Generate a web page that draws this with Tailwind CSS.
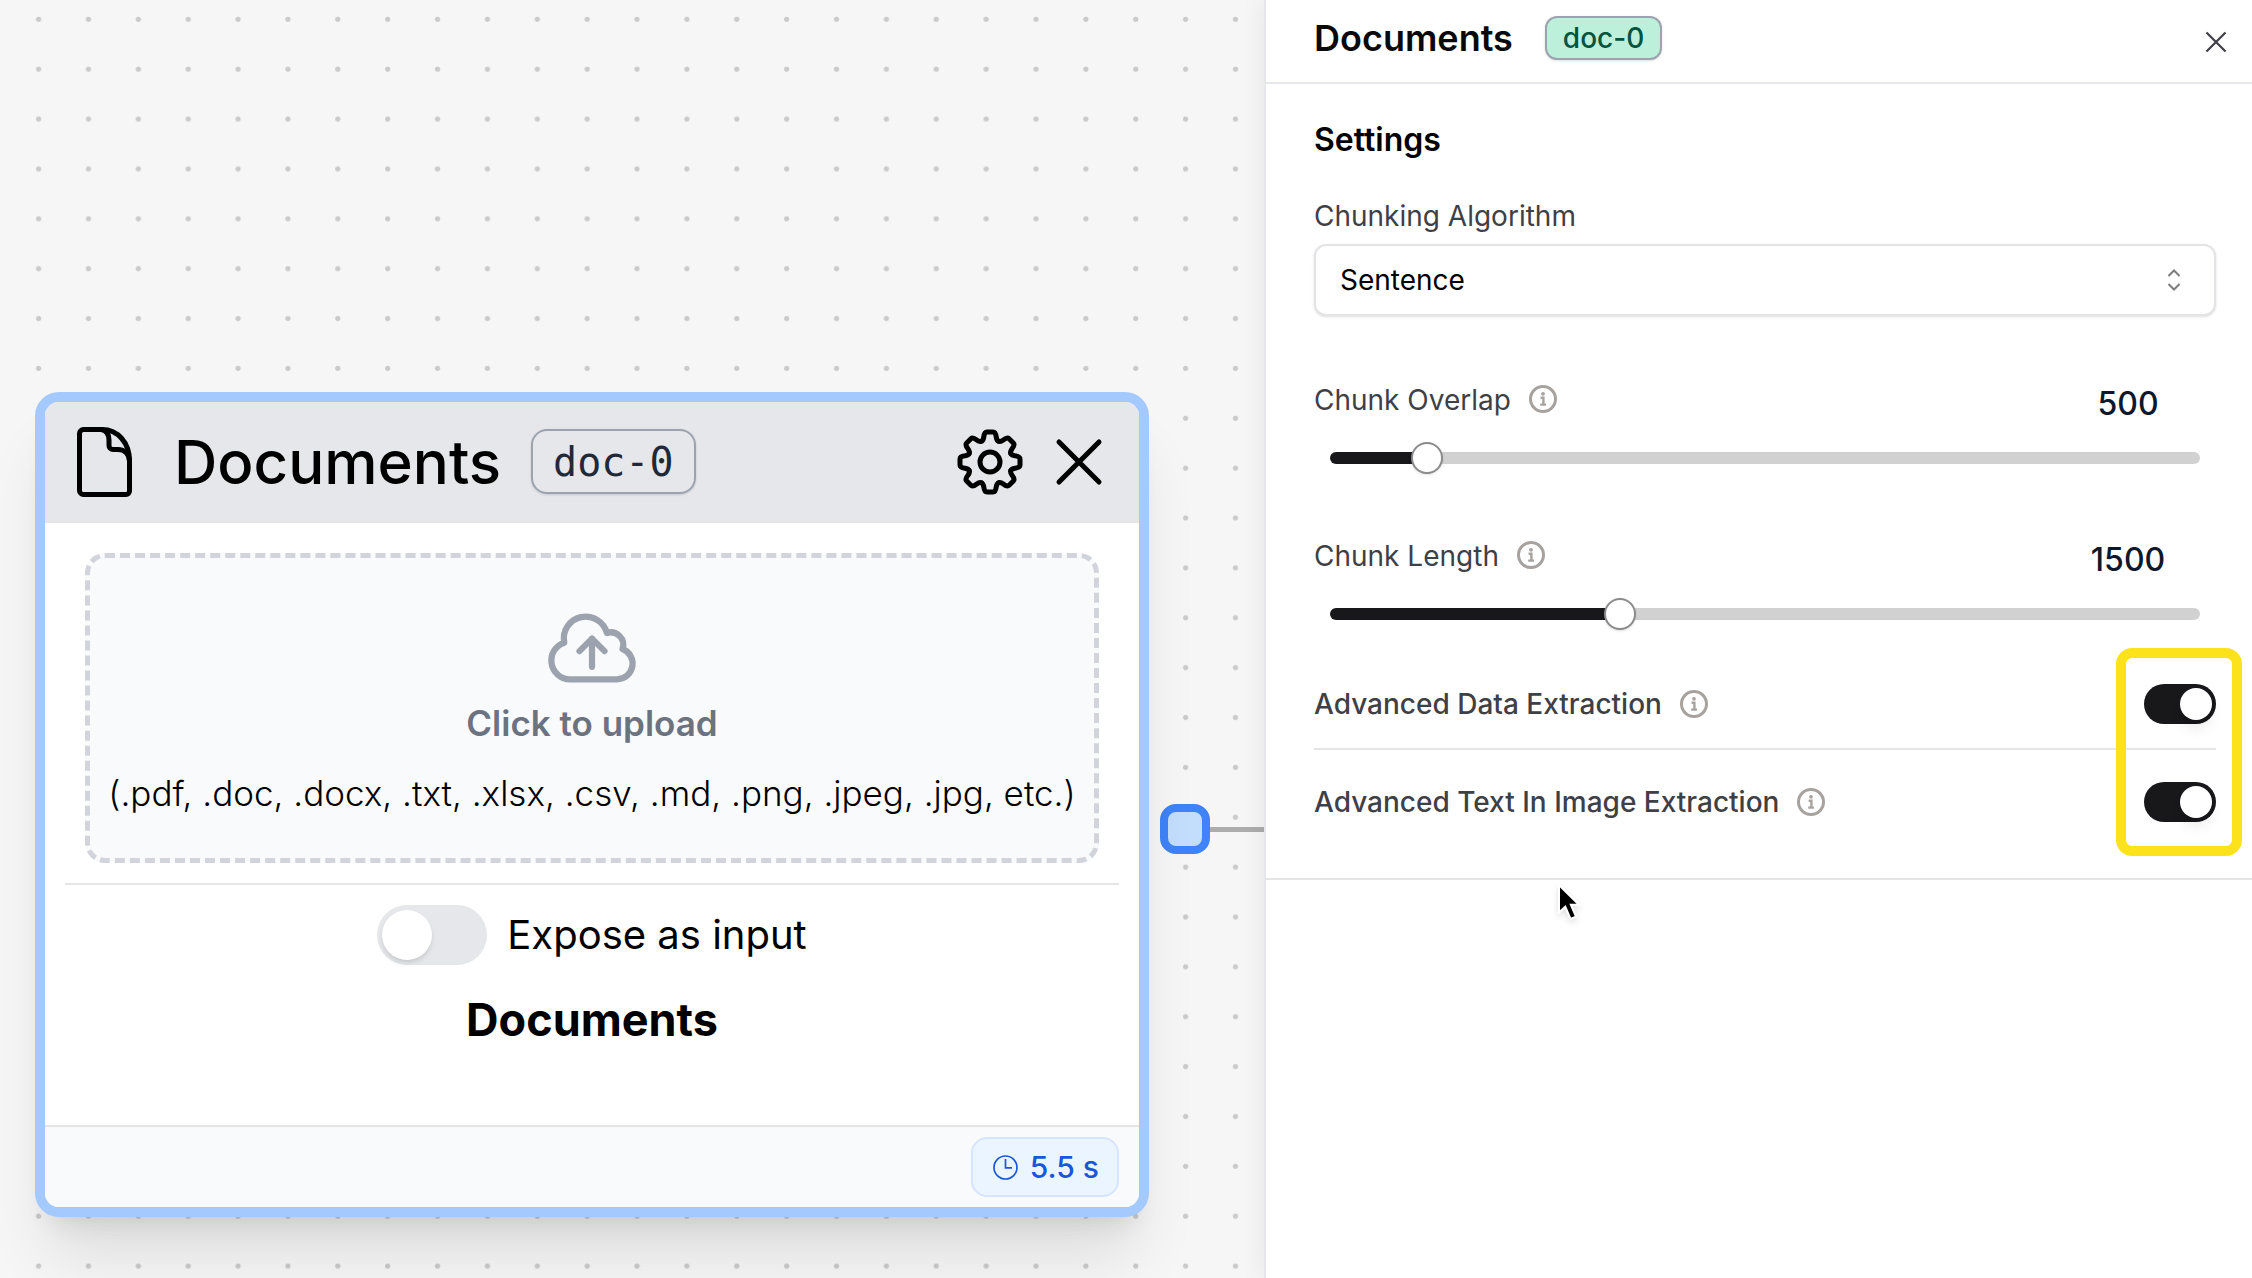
<!DOCTYPE html>
<html lang="en">
<head>
<meta charset="utf-8">
<meta name="viewport" content="width=device-width, initial-scale=1">
<title>Documents node</title>
<script src="https://cdn.jsdelivr.net/npm/@tailwindcss/browser@4"></script>
</head>
<body class="bg-white font-['Inter',sans-serif] text-black">
<svg class="hidden" aria-hidden="true">
  <symbol id="info" viewBox="0 0 28 28">
    <circle cx="14" cy="14" r="12.500" fill="none" stroke="currentColor" stroke-width="3"/>
    <circle cx="14" cy="8.800" r="1.900" fill="currentColor"/>
    <path d="M11.600 12.800H14.400V19.600M11.200 19.600H17" fill="none" stroke="currentColor" stroke-width="2.400"/>
  </symbol>
</svg>
<div class="grid min-h-screen grid-cols-[1264fr_988fr]">

  <!-- Flow canvas -->
  <main class="relative overflow-hidden bg-[#f6f6f6]">
    <svg class="absolute inset-0 size-full" aria-hidden="true">
      <defs>
        <pattern id="dots" width="49.87" height="49.87" patternUnits="userSpaceOnUse">
          <circle cx="38.6" cy="19.3" r="2.600" fill="#cacaca"/>
        </pattern>
      </defs>
      <rect width="100%" height="100%" fill="url(#dots)"/>
    </svg>

    <div class="absolute top-[827px] right-0 left-[1200px] h-[5px] bg-[#adadad]"></div>
    <div class="absolute top-[804px] left-[1160px] size-[50px] rounded-2xl border-8 border-[#3f83f8] bg-[#c3ddfd]"></div>

    <article class="absolute top-[392px] left-[35px] w-[1114px] rounded-3xl border-10 border-[#a4c9ff] bg-white shadow-[0_50px_62px_-12px_rgba(0,0,0,0.1),0_20px_25px_-15px_rgba(0,0,0,0.1)]">
      <header class="flex h-[121px] items-center rounded-t-[14px] border-b-2 border-[#e5e5e5] bg-[#e5e7eb] px-8">
        <svg class="h-[70px] w-[55px]" viewBox="0 0 55 70" fill="none" stroke="#000" stroke-width="5" stroke-linejoin="round" aria-hidden="true">
          <path d="M6.500 2.500H25C41 2.500 52.500 16 52.500 34V64a3.500 3.500 0 0 1-3.500 3.500H6.500A4 4 0 0 1 2.500 63.500V6.500A4 4 0 0 1 6.500 2.500Z"/>
          <path d="M24 2.500C30 3.500 32 8 32 13V18.500a4 4 0 0 0 4 4H41C47.500 22.500 52.500 27 52.500 34"/>
        </svg>
        <h2 class="ml-[42px] text-[60px] leading-16 font-medium">Documents</h2>
        <span class="ml-[30px] flex h-[65px] items-center rounded-2xl border-2 border-[#9ca3af] px-5 font-['DejaVu_Sans_Mono',monospace] text-[40px] text-[#1f2937] shadow-sm">doc-0</span>
        <button class="ml-auto" aria-label="Node settings">
          <svg class="size-[66px]" viewBox="-33 -33 66 66" fill="none" stroke="#000" stroke-width="5" stroke-linecap="round">
            <defs><path id="tooth" d="M-8.600-20.800Q-6.750-21.600-6.200-25Q-5.600-30-3-30H3Q5.600-30 6.200-25Q6.750-21.600 8.600-20.800"/></defs>
            <circle r="10"/>
            <use href="#tooth"/>
            <use href="#tooth" transform="rotate(45)"/>
            <use href="#tooth" transform="rotate(90)"/>
            <use href="#tooth" transform="rotate(135)"/>
            <use href="#tooth" transform="rotate(180)"/>
            <use href="#tooth" transform="rotate(225)"/>
            <use href="#tooth" transform="rotate(270)"/>
            <use href="#tooth" transform="rotate(315)"/>
          </svg>
        </button>
        <button class="ml-7" aria-label="Delete node">
          <svg class="size-[56px]" viewBox="0 0 56 56" fill="none" stroke="#000" stroke-width="5" stroke-linecap="round">
            <path d="M8 8 48 48M48 8 8 48"/>
          </svg>
        </button>
      </header>

      <div class="pt-[30px]">
        <button class="mx-10 flex w-[calc(100%-80px)] flex-col items-center rounded-[20px] border-5 border-dashed border-[#d1d5db] bg-[#f9fafb] pt-10 pb-10">
          <svg class="size-[100px]" viewBox="0 0 24 24" fill="none" stroke="#9ca3af" stroke-width="1.500" stroke-linecap="round" stroke-linejoin="round" aria-hidden="true">
            <path d="M12 16.500V9.750m0 0 3 3m-3-3-3 3M6.750 19.500a4.500 4.500 0 0 1-1.410-8.775 5.250 5.250 0 0 1 10.233-2.330 3 3 0 0 1 3.758 3.848A3.752 3.752 0 0 1 18 19.500H6.750Z"/>
          </svg>
          <span class="text-[35px] leading-[50px] font-semibold text-[#6b7280]">Click to upload</span>
          <span class="mt-5 text-[35px] leading-[50px] font-light whitespace-nowrap">(.pdf, .doc, .docx, .txt, .xlsx, .csv, .md, .png, .jpeg, .jpg, etc.)</span>
        </button>
        <hr class="mx-5 mt-5 border-t-2 border-[#e5e5e5]">
        <label class="mt-5 flex items-center justify-center gap-5 text-[40px] leading-[60px]">
          <input type="checkbox" class="h-[60px] w-[110px] appearance-none rounded-full bg-[#e5e7eb] p-[5px] before:block before:size-[50px] before:rounded-full before:bg-white before:shadow-md">
          Expose as input
        </label>
        <h3 class="mt-5 text-center text-[45px] leading-[70px] font-bold">Documents</h3>
      </div>

      <footer class="mt-[70px] flex justify-end rounded-b-[14px] border-t-2 border-[#e5e5e5] bg-[#f9fafb] px-5 py-[10px]">
        <span class="flex h-[60px] items-center gap-3 rounded-2xl border-2 border-[#d6e5fd] bg-[#ebf5ff] pr-[18px] pl-5 text-[30px] font-medium text-[#1a56db]">
          <svg class="size-[25px]" viewBox="0 0 25 25" fill="none" stroke="currentColor" stroke-width="1.700" aria-hidden="true">
            <circle cx="12.500" cy="12.500" r="11.500"/><path d="M12.500 4V12.800H19"/>
          </svg>
          5.5 s
        </span>
      </footer>
    </article>
  </main>

  <!-- Settings panel -->
  <aside class="relative border-l-2 border-[#e5e7eb] bg-white shadow-[0_0_24px_rgba(0,0,0,0.08)]">
    <header class="flex items-start border-b-2 border-[#e5e7eb] pt-4 pr-[22px] pb-[14px] pl-12">
      <div class="flex h-11 items-center gap-8">
        <h1 class="text-[36px] leading-10 font-semibold text-[#09090b]">Documents</h1>
        <span class="flex h-11 items-center rounded-xl border-2 border-[#9ca3af] bg-[#bcf0da] px-4 text-[28px] font-medium text-[#03543f] shadow-sm">doc-0</span>
      </div>
      <button class="ml-auto flex h-[52px] items-center" aria-label="Close panel">
        <svg class="size-7" viewBox="0 0 28 28" fill="none" stroke="#3f3f46" stroke-width="2.200">
          <path d="M4.500 4.500 23.500 23.500M23.500 4.500 4.500 23.500"/>
        </svg>
      </button>
    </header>

    <section class="border-b-2 border-[#e5e5e5] pt-9 pr-9 pb-14 pl-12 text-[28px] leading-10 text-[#3f3f46]">
      <h2 class="text-[32px] leading-10 font-semibold text-black">Settings</h2>

      <label for="algorithm" class="mt-9 block">Chunking Algorithm</label>
      <div class="relative mt-2">
        <select id="algorithm" class="block h-[72px] w-full appearance-none rounded-xl border-2 border-[#e4e4e7] bg-white px-6 text-black shadow-sm">
          <option>Sentence</option>
        </select>
        <svg class="pointer-events-none absolute top-6 right-[34px] h-6 w-4" viewBox="0 0 16 24" fill="none" stroke="#7c7c7c" stroke-width="2" aria-hidden="true">
          <path d="M2.500 8 8 2.500 13.500 8M2.500 16 8 21.500 13.500 16"/>
        </svg>
      </div>

      <div class="mt-16 flex h-[46px] items-start">
        <label for="overlap">Chunk Overlap</label>
        <svg class="mt-[5px] ml-[18px] size-7 text-[#a8a29e]"><use href="#info"/></svg>
        <input class="ml-auto h-[46px] w-[176px] text-center text-[32px] font-medium text-[#0f172a]" value="500" aria-label="Chunk Overlap value">
      </div>
      <div class="mx-4 mt-4">
        <input id="overlap" type="range" min="20" max="5000" step="10" value="500" class="block h-8 w-full appearance-none bg-transparent [&::-webkit-slider-runnable-track]:h-3 [&::-webkit-slider-runnable-track]:rounded-full [&::-webkit-slider-runnable-track]:bg-[linear-gradient(to_right,#18181b_11%,#d1d1d1_11%)] [&::-webkit-slider-thumb]:-mt-[10px] [&::-webkit-slider-thumb]:size-8 [&::-webkit-slider-thumb]:appearance-none [&::-webkit-slider-thumb]:rounded-full [&::-webkit-slider-thumb]:border-2 [&::-webkit-slider-thumb]:border-[#8b8b8d] [&::-webkit-slider-thumb]:bg-white [&::-webkit-slider-thumb]:shadow-sm">
      </div>

      <div class="mt-[62px] flex h-[46px] items-start">
        <label for="length">Chunk Length</label>
        <svg class="mt-[5px] ml-[18px] size-7 text-[#a8a29e]"><use href="#info"/></svg>
        <input class="ml-auto h-[46px] w-[176px] text-center text-[32px] font-medium text-[#0f172a]" value="1500" aria-label="Chunk Length value">
      </div>
      <div class="mx-4 mt-4">
        <input id="length" type="range" min="40" max="4500" step="10" value="1500" class="block h-8 w-full appearance-none bg-transparent [&::-webkit-slider-runnable-track]:h-3 [&::-webkit-slider-runnable-track]:rounded-full [&::-webkit-slider-runnable-track]:bg-[linear-gradient(to_right,#18181b_33%,#d1d1d1_33%)] [&::-webkit-slider-thumb]:-mt-[10px] [&::-webkit-slider-thumb]:size-8 [&::-webkit-slider-thumb]:appearance-none [&::-webkit-slider-thumb]:rounded-full [&::-webkit-slider-thumb]:border-2 [&::-webkit-slider-thumb]:border-[#8b8b8d] [&::-webkit-slider-thumb]:bg-white [&::-webkit-slider-thumb]:shadow-sm">
      </div>

      <div class="relative mt-[54px] font-medium">
        <div class="flex items-center border-b-2 border-[#e5e5e5] pb-6">
          <label for="data-extraction">Advanced Data Extraction</label>
          <svg class="ml-[18px] size-7 text-[#a8a29e]"><use href="#info"/></svg>
          <input id="data-extraction" type="checkbox" checked class="ml-auto h-10 w-[72px] appearance-none rounded-full bg-[#18181b] p-1 before:ml-auto before:block before:size-8 before:rounded-full before:bg-white before:shadow-lg">
        </div>
        <div class="flex items-center pt-8">
          <label for="image-extraction">Advanced Text In Image Extraction</label>
          <svg class="ml-[18px] size-7 text-[#a8a29e]"><use href="#info"/></svg>
          <input id="image-extraction" type="checkbox" checked class="ml-auto h-10 w-[72px] appearance-none rounded-full bg-[#18181b] p-1 before:ml-auto before:block before:size-8 before:rounded-full before:bg-white before:shadow-lg">
        </div>
        <div class="pointer-events-none absolute -top-9 -right-[26px] h-[208px] w-[126px] rounded-2xl border-10 border-[#fce21b]"></div>
      </div>
    </section>

    <svg class="pointer-events-none absolute top-[884px] left-[291px] h-[40px] w-[28px] drop-shadow-md" viewBox="0 0 28 40" aria-hidden="true">
      <path d="M2 1V28.500L8.300 22.700 13.500 35 19 32.600 13.900 20.700H22Z" fill="#000" stroke="#fff" stroke-width="2"/>
    </svg>
  </aside>
</div>
</body>
</html>
